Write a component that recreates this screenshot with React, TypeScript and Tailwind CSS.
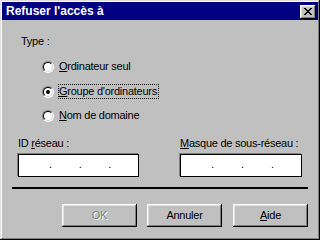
import React from "react";

function Radio({ checked }: { checked?: boolean }) {
  return (
    <span className="w-[12px] h-[12px] rounded-full border border-t-[#808080] border-l-[#808080] border-b-white border-r-white flex items-center justify-center shrink-0">
      <span className="w-[10px] h-[10px] rounded-full border border-t-black border-l-black border-b-[#dfdfdf] border-r-[#dfdfdf] bg-white flex items-center justify-center">
        {checked && <span className="w-[4px] h-[4px] rounded-full bg-black" />}
      </span>
    </span>
  );
}

function IpBox({ width }: { width: string }) {
  return (
    <div
      className={`${width} h-[23px] bg-white border border-black shadow-[-1px_-1px_0_#808080] flex items-start pt-[3px] pl-[30px] leading-[13px]`}
    >
      <span className="w-[30px]">.</span>
      <span className="w-[30px]">.</span>
      <span className="w-[30px]">.</span>
    </div>
  );
}

function Btn({ children, disabled, className }: { children: React.ReactNode; disabled?: boolean; className?: string }) {
  return (
    <div
      className={`w-[75px] h-[23px] bg-[#c0c0c0] shadow-[inset_-1px_-1px_#000,inset_1px_1px_#fff,inset_-2px_-2px_#808080,inset_2px_2px_#dfdfdf] flex items-center justify-center pb-[1px] ${
        disabled ? "text-[#808080] [text-shadow:1px_1px_0_#fff]" : "text-black"
      } ${className ?? ""}`}
    >
      {children}
    </div>
  );
}

export default function App() {
  return (
    <div className="w-[320px] h-[240px] bg-[#c0c0c0] p-[2px] shadow-[inset_-1px_-1px_#000,inset_1px_1px_#dfdfdf,inset_-2px_-2px_#808080,inset_2px_2px_#fff] flex flex-col font-['Liberation_Sans',Arial,sans-serif] text-[11px] leading-[13px] tracking-[-0.25px] text-black">
      {/* Title bar */}
      <div className="h-[18px] bg-[#000080] flex items-center justify-between pl-[4px] pr-[2px]">
        <span className="text-white font-bold text-[12px] leading-[14px] tracking-normal">Refuser l'accès à</span>
        <div className="w-[16px] h-[14px] mt-[1px] bg-[#c0c0c0] shadow-[inset_-1px_-1px_#000,inset_1px_1px_#fff,inset_-2px_-2px_#808080,inset_2px_2px_#dfdfdf] flex items-center justify-center">
          <svg width="8" height="7" viewBox="0 0 8 7" shapeRendering="crispEdges" className="ml-[-1px] mt-[-1px]">
            <g fill="#000">
              <rect x="0" y="0" width="2" height="1" />
              <rect x="6" y="0" width="2" height="1" />
              <rect x="1" y="1" width="2" height="1" />
              <rect x="5" y="1" width="2" height="1" />
              <rect x="2" y="2" width="4" height="1" />
              <rect x="3" y="3" width="2" height="1" />
              <rect x="2" y="4" width="4" height="1" />
              <rect x="1" y="5" width="2" height="1" />
              <rect x="5" y="5" width="2" height="1" />
              <rect x="0" y="6" width="2" height="1" />
              <rect x="6" y="6" width="2" height="1" />
            </g>
          </svg>
        </div>
      </div>

      {/* Content */}
      <div className="flex flex-col px-[10px]">
        <div className="mt-[15px] ml-[9px] h-[13px]">Type :</div>

        <div className="mt-[11px] ml-[30px] h-[15px] flex items-center gap-[4px]">
          <Radio />
          <span className="border border-transparent h-[15px]">
            <span className="underline">O</span>rdinateur seul
          </span>
        </div>
        <div className="mt-[10px] ml-[30px] h-[15px] flex items-center gap-[4px]">
          <Radio checked />
          <span className="border border-dotted border-black h-[15px] pr-[1px]">
            <span className="underline">G</span>roupe d'ordinateurs
          </span>
        </div>
        <div className="mt-[9px] ml-[30px] h-[15px] flex items-center gap-[4px]">
          <Radio />
          <span className="border border-transparent h-[15px]">
            <span className="underline">N</span>om de domaine
          </span>
        </div>

        <div className="mt-[14px] ml-[6px] flex gap-[41px]">
          <div className="flex flex-col">
            <div className="h-[13px]">
              ID <span className="underline">r</span>éseau :
            </div>
            <div className="mt-[4px]">
              <IpBox width="w-[121px]" />
            </div>
          </div>
          <div className="flex flex-col">
            <div className="h-[13px]">
              <span className="underline">M</span>asque de sous-réseau :
            </div>
            <div className="mt-[4px]">
              <IpBox width="w-[122px]" />
            </div>
          </div>
        </div>

        <div className="mt-[10px] h-[2px] bg-black" />

        <div className="mt-[15px] ml-[50px] flex">
          <Btn disabled>OK</Btn>
          <Btn className="ml-[10px]">Annuler</Btn>
          <Btn className="ml-[11px]">
            <span>
              <span className="underline">A</span>ide
            </span>
          </Btn>
        </div>
      </div>
    </div>
  );
}
